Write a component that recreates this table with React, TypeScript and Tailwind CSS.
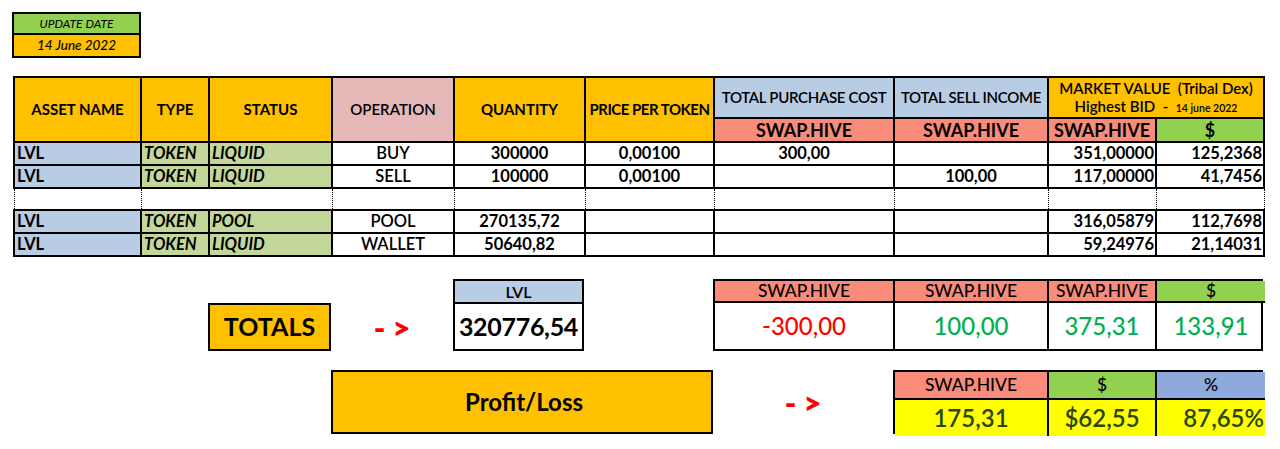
import React from 'react'

const rows = [
  { status: 'LIQUID', op: 'BUY', qty: '300000', price: '0,00100', buy: '300,00', sell: '', hive: '351,00000', usd: '125,2368' },
  { status: 'LIQUID', op: 'SELL', qty: '100000', price: '0,00100', buy: '', sell: '100,00', hive: '117,00000', usd: '41,7456' },
  null,
  { status: 'POOL', op: 'POOL', qty: '270135,72', price: '', buy: '', sell: '', hive: '316,05879', usd: '112,7698' },
  { status: 'LIQUID', op: 'WALLET', qty: '50640,82', price: '', buy: '', sell: '', hive: '59,24976', usd: '21,14031' },
]

const cell = 'border-2 border-black p-0 leading-none'
const dotted = 'border-x border-y-2 border-black [border-style:solid_dotted] p-0'

function Arrow() {
  return (
    <div className="flex items-center justify-center text-[31px] leading-none font-extrabold whitespace-pre text-[#ff0000]">
      {'- >'}
    </div>
  )
}

export default function App() {
  return (
    <div className="min-h-[449px] w-[1280px] bg-white pl-[12px] pt-[12px] font-['Lato',sans-serif] text-black">
      {/* update date */}
      <div className="w-[129px] border-2 border-black">
        <div className="flex h-[21px] items-center justify-center border-b-2 border-black bg-[#92d050] text-[12px] italic">
          UPDATE DATE
        </div>
        <div className="flex h-[21px] items-center justify-center bg-[#ffc000] text-[13.5px] font-medium italic">
          14 June 2022
        </div>
      </div>

      {/* main table */}
      <table className="mt-[18px] ml-[1px] w-[1250px] table-fixed border-collapse">
        <colgroup>
          <col className="w-[127px]" />
          <col className="w-[68px]" />
          <col className="w-[123px]" />
          <col className="w-[122px]" />
          <col className="w-[131px]" />
          <col className="w-[129px]" />
          <col className="w-[180px]" />
          <col className="w-[154px]" />
          <col className="w-[108px]" />
          <col className="w-[108px]" />
        </colgroup>
        <thead className="text-[15px] font-bold">
          <tr className="h-[41px]">
            <th rowSpan={2} className={`${cell} bg-[#ffc000]`}>ASSET NAME</th>
            <th rowSpan={2} className={`${cell} bg-[#ffc000]`}>TYPE</th>
            <th rowSpan={2} className={`${cell} bg-[#ffc000]`}>STATUS</th>
            <th rowSpan={2} className={`${cell} bg-[#e6b8b7] font-semibold`}>OPERATION</th>
            <th rowSpan={2} className={`${cell} bg-[#ffc000]`}>QUANTITY</th>
            <th rowSpan={2} className={`${cell} bg-[#ffc000] tracking-[-0.5px]`}>PRICE PER TOKEN</th>
            <th className={`${cell} bg-[#b8cce4] font-semibold tracking-[-0.3px]`}>TOTAL PURCHASE COST</th>
            <th className={`${cell} bg-[#b8cce4] font-semibold tracking-[-0.3px]`}>TOTAL SELL INCOME</th>
            <th colSpan={2} className={`${cell} bg-[#ffc000] font-semibold`}>
              <div className="leading-[18px]">MARKET VALUE&nbsp; (Tribal Dex)</div>
              <div className="leading-[18px]">
                Highest BID&nbsp; -&nbsp; <span className="text-[10.5px]">14 june 2022</span>
              </div>
            </th>
          </tr>
          <tr className="h-[24px] text-[18px] font-semibold">
            <th className={`${cell} bg-[#f98b7b]`}>SWAP.HIVE</th>
            <th className={`${cell} bg-[#f98b7b]`}>SWAP.HIVE</th>
            <th className={`${cell} bg-[#f98b7b]`}>SWAP.HIVE</th>
            <th className={`${cell} bg-[#92d050]`}>$</th>
          </tr>
        </thead>
        <tbody className="text-[16.5px] font-bold">
          {rows.map((r, i) =>
            r ? (
              <tr key={i} className="h-[23px]">
                <td className={`${cell} bg-[#b8cce4] pl-[2px]`}>LVL</td>
                <td className={`${cell} bg-[#c4d79b] pl-[2px] italic`}>TOKEN</td>
                <td className={`${cell} bg-[#c4d79b] pl-[2px] italic`}>{r.status}</td>
                <td className={`${cell} text-center font-semibold`}>{r.op}</td>
                <td className={`${cell} text-center`}>{r.qty}</td>
                <td className={`${cell} text-center`}>{r.price}</td>
                <td className={`${cell} text-center`}>{r.buy}</td>
                <td className={`${cell} text-center`}>{r.sell}</td>
                <td className={`${cell} pr-[1px] text-right`}>{r.hive}</td>
                <td className={`${cell} pr-[1px] text-right`}>{r.usd}</td>
              </tr>
            ) : (
              <tr key={i} className="h-[22px]">
                <td className={dotted} />
                <td colSpan={2} className={dotted} />
                <td className={dotted} />
                <td className={dotted} />
                <td className={dotted} />
                <td className={dotted} />
                <td className={dotted} />
                <td className={dotted} />
                <td className={dotted} />
              </tr>
            ),
          )}
        </tbody>
      </table>

      {/* totals + profit/loss */}
      <div className="mt-[22px] ml-[1px] grid grid-cols-[127px_68px_123px_122px_131px_129px_180px_154px_108px_108px] grid-rows-[72px_64px] gap-y-[19px]">
        <div className="col-start-3 flex h-[48px] items-center justify-center self-end border-2 border-black bg-[#ffc000] text-[25px] font-bold">
          TOTALS
        </div>
        <div className="col-start-4 row-start-1 flex items-center justify-center pt-[24px]">
          <Arrow />
        </div>
        <div className="col-start-5 row-start-1 flex flex-col border-2 border-black">
          <div className="flex h-[23px] items-center justify-center border-b-2 border-black bg-[#b8cce4] text-[16px] font-semibold">
            LVL
          </div>
          <div className="flex flex-1 items-center justify-center text-[25px] font-bold tracking-[-0.3px]">
            320776,54
          </div>
        </div>
        <div className="col-span-4 col-start-7 row-start-1 grid grid-cols-[180px_154px_108px_108px] grid-rows-[22px_1fr] border-2 border-black text-[24px] font-medium">
          <div className="flex items-center justify-center border-r-2 border-b-2 border-black bg-[#f98b7b] text-[17.5px]">SWAP.HIVE</div>
          <div className="flex items-center justify-center border-r-2 border-b-2 border-black bg-[#f98b7b] text-[17.5px]">SWAP.HIVE</div>
          <div className="flex items-center justify-center border-r-2 border-b-2 border-black bg-[#f98b7b] text-[17.5px]">SWAP.HIVE</div>
          <div className="flex items-center justify-center border-b-2 border-black bg-[#92d050] text-[17.5px]">$</div>
          <div className="flex items-center justify-center border-r-2 border-black text-[#ff0000]">-300,00</div>
          <div className="flex items-center justify-center border-r-2 border-black text-[#00b050]">100,00</div>
          <div className="flex items-center justify-center border-r-2 border-black text-[#00b050]">375,31</div>
          <div className="flex items-center justify-center text-[#00b050]">133,91</div>
        </div>

        <div className="col-span-3 col-start-4 row-start-2 flex items-center justify-center border-2 border-black bg-[#ffc000] pl-[4px] text-[24px] font-bold">
          Profit/Loss
        </div>
        <div className="col-start-7 row-start-2 flex items-center justify-center">
          <Arrow />
        </div>
        <div className="col-span-3 col-start-8 row-start-2 grid grid-cols-[154px_108px_108px] grid-rows-[28px_1fr] border-2 border-black text-[24px] font-semibold text-[#2a4514]">
          <div className="flex items-center justify-center border-r-2 border-b-2 border-black bg-[#f98b7b] text-[17.5px] font-medium text-black">SWAP.HIVE</div>
          <div className="flex items-end justify-center border-r-2 border-b-2 border-black bg-[#92d050] text-[17.5px] font-medium text-black">$</div>
          <div className="flex items-end justify-center border-b-2 border-black bg-[#8ea9db] text-[17.5px] font-medium text-black">%</div>
          <div className="flex items-center justify-center border-r-2 border-black bg-[#ffff00]">175,31</div>
          <div className="flex items-center justify-center border-r-2 border-black bg-[#ffff00]">$62,55</div>
          <div className="flex items-center justify-end bg-[#ffff00] pr-[1px]">87,65%</div>
        </div>
      </div>
    </div>
  )
}
